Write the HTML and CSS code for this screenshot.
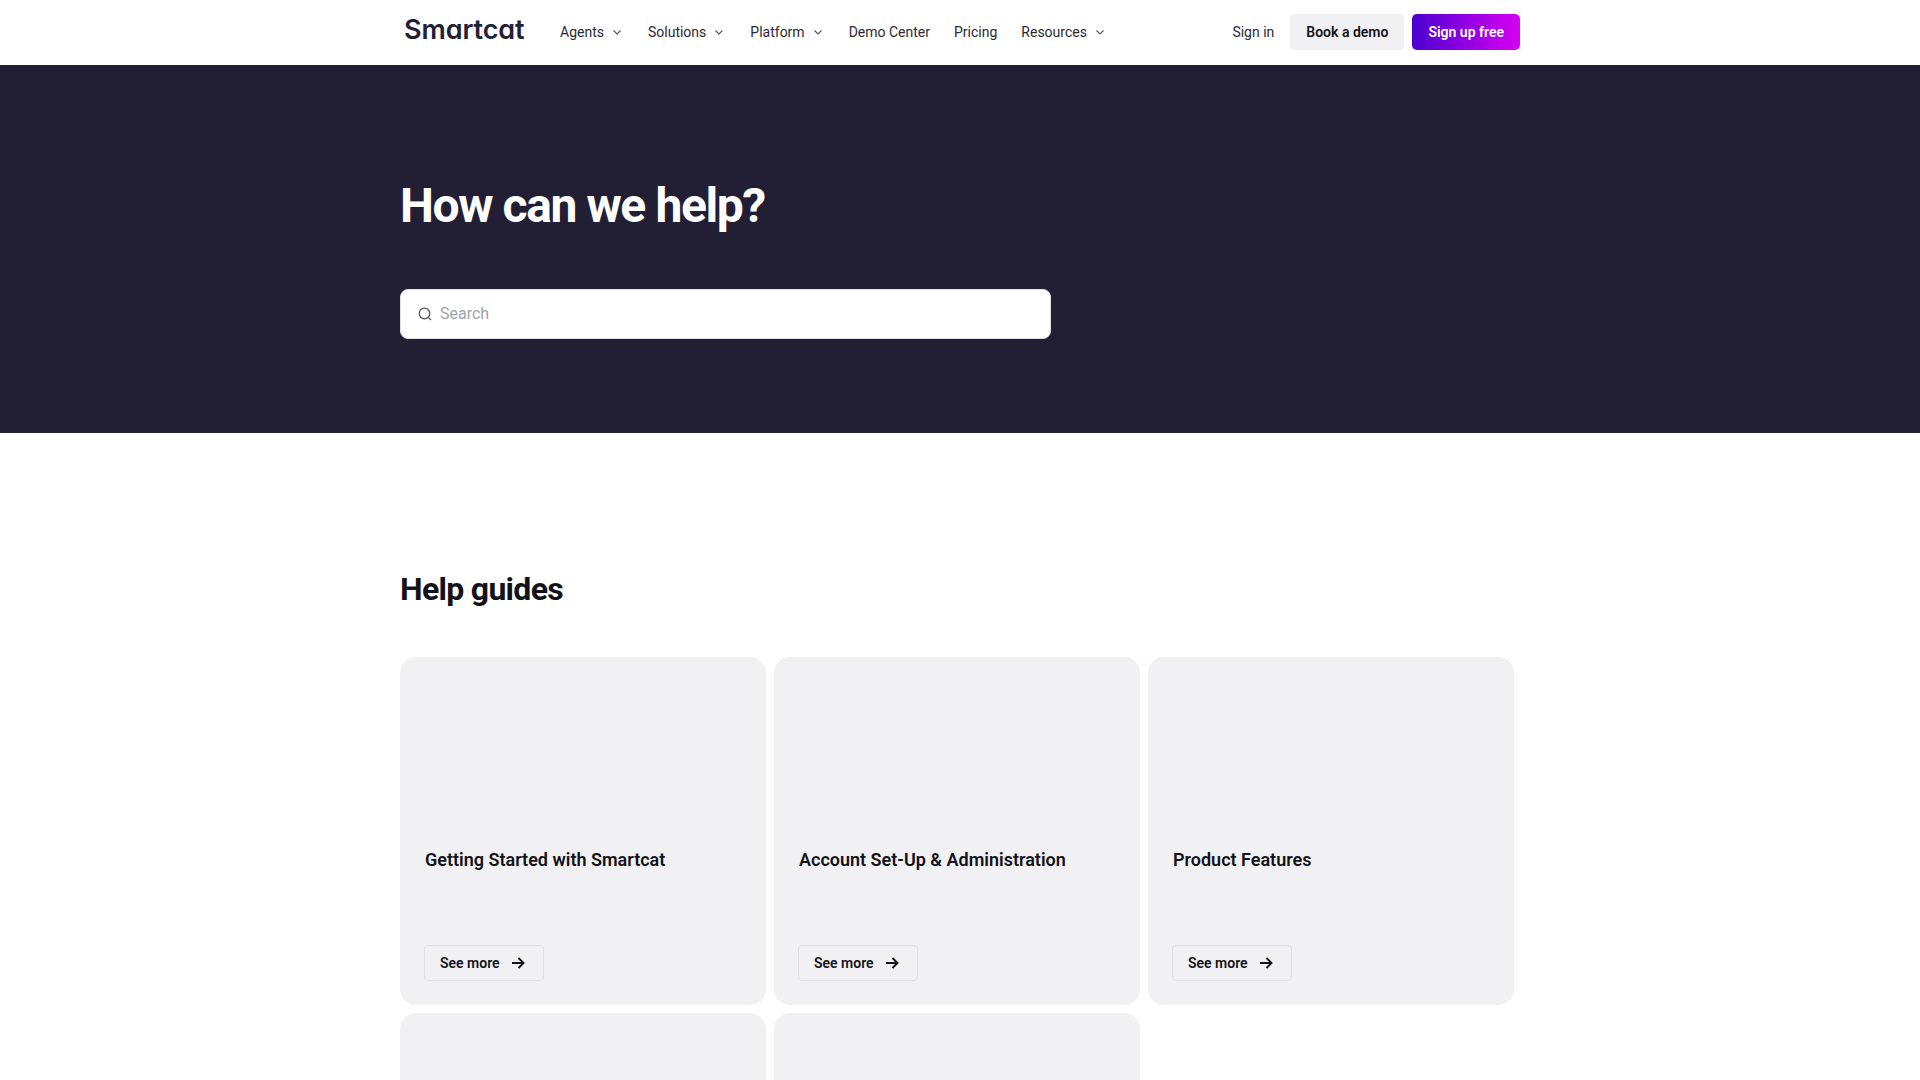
FILE: index.html
```html
<!DOCTYPE html>
<html lang="en">

    <head>
        <meta charset="UTF-8">
        <meta name="viewport" content="width=device-width, initial-scale=1.0">
        <title>Smartcat Help Center</title>

        <link rel="stylesheet" href="styles.css">

    </head>

    <body>
        <header class="site-header">
            <div class="container header-row">
                <a class="logo" href="#">Smartcat</a>
                <nav class="main-nav">
                    <a href="#">Agents <svg class="chevron" viewBox="0 0 12 12"><path d="M1.500 4.500 5 8l3.500-3.500"/></svg></a>
                    <a href="#">Solutions <svg class="chevron" viewBox="0 0 12 12"><path d="M1.500 4.500 5 8l3.500-3.500"/></svg></a>
                    <a href="#">Platform <svg class="chevron" viewBox="0 0 12 12"><path d="M1.500 4.500 5 8l3.500-3.500"/></svg></a>
                    <a href="#">Demo Center</a>
                    <a href="#">Pricing</a>
                    <a href="#">Resources <svg class="chevron" viewBox="0 0 12 12"><path d="M1.500 4.500 5 8l3.500-3.500"/></svg></a>
                </nav>
                <div class="header-actions">
                    <a class="sign-in" href="#">Sign in</a>
                    <a class="btn btn-grey" href="#">Book a demo</a>
                    <a class="btn btn-gradient" href="#">Sign up free</a>
                </div>
            </div>
        </header>

        <section class="hero">
            <div class="container">
                <h1>How can we help?</h1>
                <div class="search-box">
                    <svg class="search-icon" viewBox="0 0 16 16"><circle cx="7.500" cy="7.500" r="5.300"/><path d="m11.300 11.300 2.700 2.700"/></svg>
                    <span class="search-placeholder">Search</span>
                </div>
            </div>
        </section>

        <section class="guides">
            <div class="container">
                <h2>Help guides</h2>
                <div class="cards">
                    <div class="card">
                        <h3>Getting Started with Smartcat</h3>
                        <a class="see-more" href="#">See more <svg class="arrow" viewBox="0 0 16 16"><path d="M2 8h11.500M8.500 3l5 5-5 5"/></svg></a>
                    </div>
                    <div class="card">
                        <h3>Account Set-Up &amp; Administration</h3>
                        <a class="see-more" href="#">See more <svg class="arrow" viewBox="0 0 16 16"><path d="M2 8h11.500M8.500 3l5 5-5 5"/></svg></a>
                    </div>
                    <div class="card">
                        <h3>Product Features</h3>
                        <a class="see-more" href="#">See more <svg class="arrow" viewBox="0 0 16 16"><path d="M2 8h11.500M8.500 3l5 5-5 5"/></svg></a>
                    </div>
                    <div class="card"></div>
                    <div class="card"></div>
                </div>
            </div>
        </section>
    </body>

</html>
```

FILE: styles.css
```css
* {
    margin: 0;
    padding: 0;
    box-sizing: border-box;
}

html {
    height: 1080px;
    overflow: hidden;
}

body {
    font-family: 'Roboto', sans-serif;
    background-color: #fff;
    color: #131219;
}

a {
    color: inherit;
    text-decoration: none;
}

.container {
    width: 1120px;
    margin: 0 auto;
}

.site-header {
    height: 65px;
    background-color: #fff;
}

.header-row {
    height: 64px;
    display: flex;
    align-items: center;
}

.logo {
    font-family: 'Inter', sans-serif;
    font-feature-settings: 'cv11';
    font-size: 27px;
    font-weight: 600;
    letter-spacing: -0.1px;
    color: #231f35;
    margin-left: 4px;
    width: 156px;
    flex-shrink: 0;
    white-space: nowrap;
    position: relative;
    top: -3px;
}

.main-nav {
    display: flex;
    align-items: center;
    gap: 24px;
    font-size: 14px;
    color: #2a2933;
}

.main-nav a {
    display: flex;
    align-items: center;
    gap: 8px;
}

.chevron {
    width: 12px;
    height: 12px;
    fill: none;
    stroke: #55545c;
    stroke-width: 1.1;
}

.header-actions {
    margin-left: auto;
    display: flex;
    align-items: center;
    font-size: 14px;
}

.sign-in {
    margin-right: 16px;
    color: #2a2933;
}

.btn {
    height: 36px;
    display: flex;
    align-items: center;
    padding: 0 16px;
    border-radius: 4px;
    font-weight: 600;
}

.btn-grey {
    background-color: #f1f1f4;
    margin-right: 8px;
}

.btn-gradient {
    background: linear-gradient(90deg, #4b00d1, #d800f2);
    color: #fff;
    border-radius: 5px;
}

.hero {
    height: 368px;
    background-color: #221e34;
    padding-top: 113px;
}

.hero h1 {
    font-size: 48px;
    line-height: 56px;
    font-weight: 700;
    letter-spacing: -1.4px;
    color: #fff;
    margin-bottom: 55px;
}

.search-box {
    width: 651px;
    height: 50px;
    background-color: #fff;
    border: 1px solid #e0e0e4;
    border-radius: 8px;
    display: flex;
    align-items: center;
    padding-left: 16px;
    padding-bottom: 1px;
    gap: 7px;
}

.search-icon {
    width: 16px;
    height: 16px;
    fill: none;
    stroke: #55545c;
    stroke-width: 1.2;
}

.search-placeholder {
    font-size: 16px;
    color: #a3a3a8;
}

.guides {
    padding-top: 137px;
}

.guides h2 {
    font-size: 32px;
    line-height: 38px;
    font-weight: 700;
    letter-spacing: -0.7px;
    margin-bottom: 49px;
}

.cards {
    width: 1114px;
    display: grid;
    grid-template-columns: repeat(3, 366px);
    gap: 8px;
}

.card {
    height: 348px;
    background-color: #f1f1f4;
    border-radius: 16px;
    padding: 191px 24px 24px 25px;
    display: flex;
    flex-direction: column;
    align-items: flex-start;
}

.card h3 {
    font-size: 18px;
    line-height: 24px;
    font-weight: 600;
}

.see-more {
    margin-top: auto;
    margin-left: -1px;
    height: 36px;
    display: flex;
    align-items: center;
    gap: 10px;
    padding: 0 17px 0 15px;
    border: 1px solid #e0e0e4;
    border-radius: 4px;
    font-size: 14px;
    font-weight: 600;
}

.arrow {
    width: 16px;
    height: 16px;
    fill: none;
    stroke: #131219;
    stroke-width: 1.9;
}
```
